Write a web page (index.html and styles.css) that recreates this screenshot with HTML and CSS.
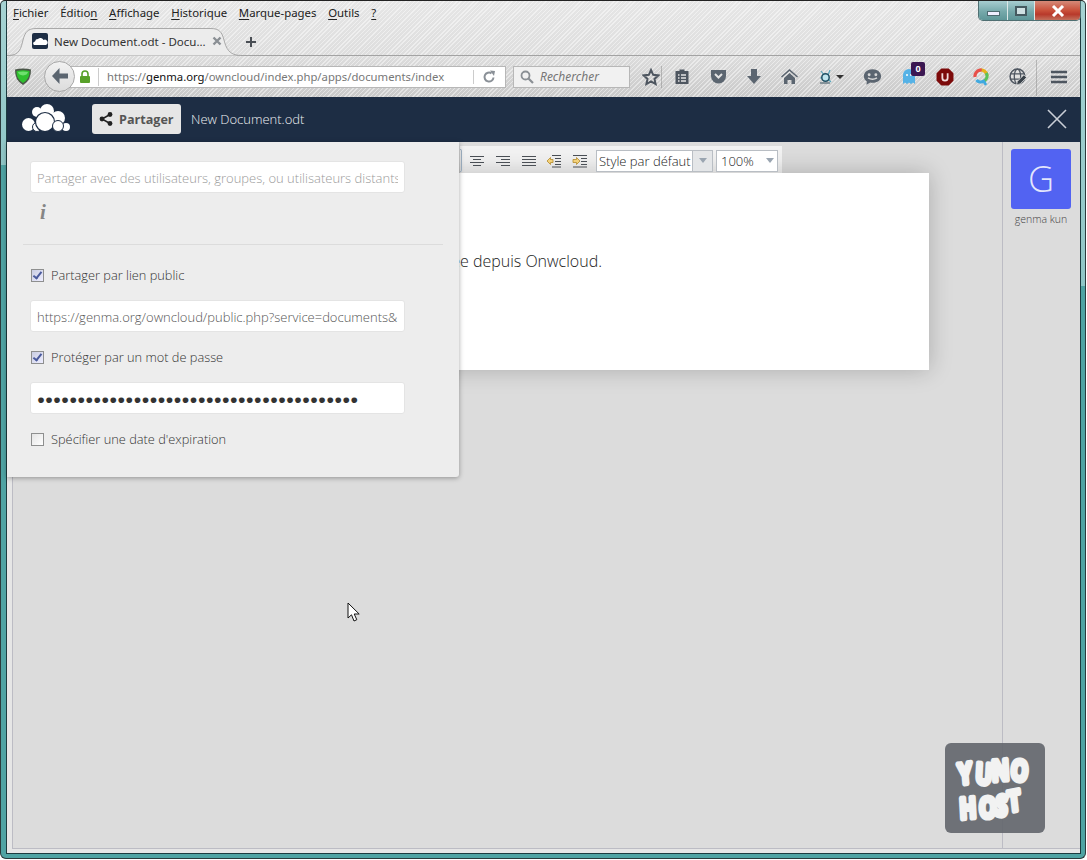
FILE: index.html
```html
<!DOCTYPE html>
<html lang="fr">
<head>
<meta charset="utf-8">
<title>New Document.odt</title>
<link rel="stylesheet" href="styles.css">
</head>
<body>
<div class="window">
  <div class="frame">
    <div class="browser">
      <div class="titlebar">
        <nav class="menu">
          <span><u>F</u>ichier</span>
          <span>Éditio<u>n</u></span>
          <span><u>A</u>ffichage</span>
          <span><u>H</u>istorique</span>
          <span><u>M</u>arque-pages</span>
          <span><u>O</u>utils</span>
          <span><u>?</u></span>
        </nav>
        <div class="winbtns">
          <div class="winbtn min"><i></i></div>
          <div class="winbtn max"><i></i></div>
          <div class="winbtn close">
            <svg width="16" height="12" viewBox="0 0 16 12"><path d="M3 1l10 10M13 1L3 11" stroke="#fff" stroke-width="3"/></svg>
          </div>
        </div>
      </div>

      <div class="tabstrip">
        <div class="tab">
          <svg class="tab-shape" width="233" height="28" viewBox="0 0 233 28"><path d="M0 27.500C12 27.500 13 20 15 12 17 4 20 .5 28 .5H203C211 .5 214 4 216 12 218 20 221 27.500 233 27.500" fill="#ececec" stroke="#a9a9a9"/></svg>
          <svg class="favicon" width="16" height="16" viewBox="0 0 16 16"><rect width="16" height="16" rx="2" fill="#1d2d44"/><path d="M2 12a2 2 0 0 1 1-3.600 3 3 0 0 1 3-2.400 3.400 3.400 0 0 1 5.500 1 2.600 2.600 0 0 1 2.500 5z" fill="#fff"/></svg>
          <span class="tab-title">New Document.odt - Docu...</span>
          <svg class="tab-x" width="10" height="10" viewBox="0 0 10 10"><path d="M1.500 1.500l7 7M8.500 1.500l-7 7" stroke="#8a8f94" stroke-width="2.400"/></svg>
        </div>
        <svg class="newtab" width="12" height="12" viewBox="0 0 12 12"><path d="M6 1v10M1 6h10" stroke="#4a4f55" stroke-width="2"/></svg>
      </div>

      <div class="navbar">
        <svg class="shield" width="18" height="19" viewBox="0 0 18 19"><path d="M1 2.500Q9 .5 17 2.500 17.500 13 9 18 .5 13 1 2.500z" fill="#4a5648"/><path d="M2.500 4Q9 2.500 15.500 4 15.800 12 9 16 2.200 12 2.500 4z" fill="#2fc02f"/><path d="M4 5Q9 4 14 5 13.500 8 9 8.500 4.500 8 4 5z" fill="#6fe06f"/></svg>
        <div class="urlgroup">
          <div class="backbtn">
            <svg width="20" height="18" viewBox="0 0 20 18"><path d="M9.500 1L2 9l7.500 8V11.500H18v-5H9.500z" fill="#5b6570"/></svg>
          </div>
          <div class="urlbar">
            <svg class="lock" width="12" height="13" viewBox="0 0 12 13"><path d="M3 6V4a3 3 0 0 1 6 0v2" fill="none" stroke="#58a12a" stroke-width="1.600"/><rect x="1" y="6" width="10" height="7" rx="1" fill="#58a12a"/></svg>
            <span class="url"><span class="dim">https://</span>genma.org<span class="dim">/owncloud/index.php/apps/documents/index</span></span>
            <svg class="reload" width="14" height="14" viewBox="0 0 14 14"><path d="M11.500 7.500A4.500 4.500 0 1 1 9.500 3.300" fill="none" stroke="#8a9097" stroke-width="2"/><path d="M8 .5l5 .5-1 5z" fill="#8a9097"/></svg>
          </div>
        </div>
        <div class="searchbar">
          <svg width="14" height="14" viewBox="0 0 14 14"><circle cx="5.500" cy="5.500" r="4" fill="none" stroke="#8a8f94" stroke-width="1.800"/><path d="M8.500 8.500l4.500 4.500" stroke="#8a8f94" stroke-width="2.200"/></svg>
          <span>Rechercher</span>
        </div>
        <div class="tools">
          <svg class="t-star" width="18" height="18" viewBox="0 0 18 18"><path d="M9 2l2.200 4.800 5.200.6-3.900 3.500 1.100 5.100L9 13.400 4.400 16l1.100-5.100L1.600 7.400l5.200-.6z" fill="none" stroke="#4e5660" stroke-width="2"/></svg>
          <span class="t-sep sep-a"></span>
          <svg class="t-clip" width="16" height="17" viewBox="0 0 16 17"><path d="M1.500 3h4V1.500h5V3h4v13h-13z" fill="#4e5660"/><path d="M4 7h1.500M7 7h5M4 10h1.500M7 10h5M4 13h1.500M7 13h5" stroke="#e4e4e4" stroke-width="1.400"/></svg>
          <svg class="t-pocket" width="17" height="15" viewBox="0 0 17 15"><path d="M1 1h15v6a7.500 7.500 0 0 1-15 0z" fill="#5b6570"/><path d="M5 5l3.500 3.500L12 5" fill="none" stroke="#e4e4e4" stroke-width="2"/></svg>
          <svg class="t-down" width="16" height="15" viewBox="0 0 16 15"><path d="M5 0h6v7h4l-7 8-7-8h4z" fill="#5b6570"/></svg>
          <svg class="t-home" width="17" height="15" viewBox="0 0 17 15"><path d="M8.500 0L0 7.500l1 1L8.500 2l7.500 6.500 1-1z" fill="#5b6570"/><path d="M3 9l5.500-5L14 9v6h-3.500v-4h-4v4H3z" fill="#5b6570"/></svg>
          <div class="t-net">
            <svg width="16" height="16" viewBox="0 0 16 16"><path d="M4 2l3 4M13 1l-2 5M3 9l2 0M11 10l3 3" stroke="#5aa7bd" stroke-width="1.200"/><circle cx="8.500" cy="8.500" r="3.700" fill="#bfe6ef" stroke="#1f4f63" stroke-width="1.500"/><path d="M3 14h10" stroke="#6b7c86" stroke-width="1.500"/></svg>
            <i></i>
          </div>
          <svg class="t-chat" width="19" height="18" viewBox="0 0 17 16"><path d="M8.500 1C4 1 .8 3.700.8 7.300c0 2 1 3.700 2.700 4.800L3 15l3.500-2c.6.100 1.300.2 2 .2 4.500 0 7.700-2.500 7.700-5.900S13 1 8.500 1z" fill="#5b6570"/><circle cx="5.500" cy="6" r="1.300" fill="#d8d8d8"/><circle cx="11.500" cy="6" r="1.300" fill="#d8d8d8"/><path d="M4.500 8.800q4 2.400 8 0" fill="none" stroke="#d8d8d8" stroke-width="1.400"/></svg>
          <div class="t-ghost">
            <svg width="15" height="17" viewBox="0 0 15 17"><path d="M1 7a6 6 0 0 1 12 0v9l-2-1.500L9 16l-2-1.500L5 16l-2-1.500L1 16z" fill="#55b2e6"/><circle cx="5" cy="7" r="1" fill="#fff"/><circle cx="9" cy="7" r="1" fill="#fff"/></svg>
            <b class="badge">0</b>
          </div>
          <svg class="t-ublock" width="18" height="18" viewBox="0 0 17 17"><path d="M5 .5h7L16.500 5v7L12 16.500H5L.5 12V5z" fill="#7c0a0a"/><path d="M6 5v4.500a2.500 2.500 0 0 0 5 0V5" fill="none" stroke="#f0dcdc" stroke-width="1.700"/></svg>
          <svg class="t-q" width="16" height="18" viewBox="0 0 16 18"><circle cx="8" cy="8" r="6" fill="none" stroke="#e7b21c" stroke-width="3.200" stroke-dasharray="10 30" transform="rotate(-100 8 8)"/><circle cx="8" cy="8" r="6" fill="none" stroke="#e8504a" stroke-width="3.200" stroke-dasharray="11 30" transform="rotate(170 8 8)"/><circle cx="8" cy="8" r="6" fill="none" stroke="#5bc25b" stroke-width="3.200" stroke-dasharray="9 30" transform="rotate(-30 8 8)"/><circle cx="8" cy="8" r="6" fill="none" stroke="#3fa9e0" stroke-width="3.200" stroke-dasharray="8 30" transform="rotate(60 8 8)"/><path d="M10 12l3 5" stroke="#3fa9e0" stroke-width="2.600"/></svg>
          <svg class="t-globe" width="18" height="18" viewBox="0 0 17 17"><circle cx="8" cy="8" r="7" fill="#e0e0e0" stroke="#4e5660" stroke-width="1.400"/><ellipse cx="8" cy="8" rx="3" ry="7" fill="none" stroke="#4e5660" stroke-width="1.200"/><path d="M1 5.500h14M1 10.500h14" stroke="#4e5660" stroke-width="1.200"/><path d="M7 16l1-3.500 6-6 2.500 2.500-6 6z" fill="#3a424a" stroke="#e0e0e0" stroke-width=".7"/></svg>
          <span class="t-sep sep-b"></span>
          <svg class="t-menu" width="16" height="14" viewBox="0 0 16 14"><path d="M0 2h16M0 7h16M0 12h16" stroke="#4e5660" stroke-width="2.600"/></svg>
        </div>
      </div>
    </div>

    <header class="docbar">
      <svg class="cloud" width="50" height="28" viewBox="0 0 50 28">
        <circle cx="7.500" cy="20.500" r="6.500" fill="#fff"/>
        <circle cx="16" cy="8" r="5" fill="#fff"/>
        <circle cx="26" cy="7" r="7" fill="#fff"/>
        <circle cx="37" cy="14" r="7" fill="#fff"/>
        <circle cx="45" cy="23" r="4" fill="#fff"/>
        <circle cx="16" cy="23" r="4.500" fill="#fff" stroke="#1d2d44"/>
        <circle cx="24" cy="18" r="9.500" fill="#fff" stroke="#1d2d44" stroke-width="1.200"/>
        <circle cx="37" cy="22" r="5.500" fill="#fff" stroke="#1d2d44"/>
      </svg>
      <button class="sharebtn" type="button">
        <svg width="14" height="14" viewBox="0 0 14 14"><path d="M11 2.500L3 7l8 4.500" fill="none" stroke="#222" stroke-width="1.500"/><circle cx="11" cy="2.500" r="2.400" fill="#222"/><circle cx="3" cy="7" r="2.400" fill="#222"/><circle cx="11" cy="11.500" r="2.400" fill="#222"/></svg>
        <span>Partager</span>
      </button>
      <span class="docname">New Document.odt</span>
      <svg class="docclose" width="20" height="20" viewBox="0 0 20 20"><path d="M1 1l18 18M19 1L1 19" stroke="#c9ced6" stroke-width="1.600"/></svg>
    </header>

    <main class="workspace">
      <div class="editor">
        <div class="toolbar">
          <span class="tb-edge"></span>
          <svg width="16" height="12" viewBox="0 0 16 12"><path d="M1 1.500h14M4 4.500h8M1 7.500h14M4 10.500h8" stroke="#4a4f55"/></svg>
          <svg width="16" height="12" viewBox="0 0 16 12"><path d="M1 1.500h14M6 4.500h9M1 7.500h14M6 10.500h9" stroke="#4a4f55"/></svg>
          <svg width="16" height="12" viewBox="0 0 16 12"><path d="M1 1.500h14M1 4.500h14M1 7.500h14M1 10.500h14" stroke="#4a4f55"/></svg>
          <svg width="16" height="14" viewBox="0 0 16 14"><path d="M6 1.500h9M9 4.500h6M9 7.500h6M9 10.500h6M6 13h9" stroke="#4a4f55"/><path d="M1 7l3.500-3.500V5.500H7v3H4.500v2z" fill="#f4d27a" stroke="#b48a2c" stroke-width=".8"/></svg>
          <svg width="16" height="14" viewBox="0 0 16 14"><path d="M1 1.500h14M9 4.500h6M9 7.500h6M9 10.500h6M1 13h14" stroke="#4a4f55"/><path d="M8 7L4.500 3.500V5.500H1v3h3.500v2z" fill="#f4d27a" stroke="#b48a2c" stroke-width=".8"/></svg>
          <div class="select style-select">
            <span>Style par défaut</span>
            <span class="select-arrow"><i></i></span>
          </div>
          <div class="select zoom-select">
            <span>100%</span>
            <i></i>
          </div>
        </div>
        <article class="paper">
          <p>Document créée depuis Onwcloud.</p>
        </article>
      </div>

      <aside class="people">
        <div class="avatar">G</div>
        <div class="person">genma kun</div>
      </aside>

      <section class="sharepanel">
        <div class="field placeholder"><span>Partager avec des utilisateurs, groupes, ou utilisateurs distants</span></div>
        <div class="info">i</div>
        <hr>
        <label class="check"><span class="box on"></span>Partager par lien public</label>
        <div class="field"><span>https://genma.org/owncloud/public.php?service=documents&amp;</span></div>
        <label class="check"><span class="box on"></span>Protéger par un mot de passe</label>
        <div class="field dots"><span>●●●●●●●●●●●●●●●●●●●●●●●●●●●●●●●●●●●●●●●●</span></div>
        <label class="check"><span class="box"></span>Spécifier une date d'expiration</label>
      </section>

      <div class="yunohost">
        <svg width="100" height="90" viewBox="0 0 100 90">
          <text class="logo-text" x="14 30 47 65" y="32 31 29.500 28" rotate="-6 4 -4 6">YUNO</text>
          <text class="logo-text" x="15 34 50 64" y="58.500 57.500 55.500 53" rotate="-4 0 4 -8">HOST</text>
        </svg>
      </div>

      <svg class="pointer" width="14" height="21" viewBox="0 0 14 21"><path d="M1 1v15l3.500-3.200L7 19l2.800-1.300-2.600-5.700h5z" fill="#fff" stroke="#111" stroke-width="1"/></svg>
    </main>
  </div>
</div>
</body>
</html>
```

FILE: styles.css
```css
html, body { margin: 0; padding: 0; background: #fff; }
body { width: 1087px; height: 860px; overflow: hidden; font-family: "Open Sans", "Noto Sans", sans-serif; }

u { text-underline-offset: 2px; }

/* window frame */
.window { width: 1086px; height: 859px; box-sizing: border-box; background: linear-gradient(#a6d3d3, #8fc6c6) left top / 6px 164px no-repeat, linear-gradient(#a6d3d3, #8fc6c6) right top / 6px 285px no-repeat, #4fa3a3; border: 1px solid #2c3a3c; border-top-color: #222; border-radius: 5px 5px 6px 6px; padding: 0 4px 5px 5px; }
.frame { height: 100%; display: flex; flex-direction: column; background: #e6e6e6; border-left: 1px solid #1d3b3f; border-right: 1px solid #1d3b3f; border-bottom: 1px solid #1d3b3f; }

/* browser chrome */
.browser { height: 96px; flex: none; display: flex; flex-direction: column; background: repeating-linear-gradient(135deg, rgba(255,255,255,.45) 0 1px, rgba(255,255,255,0) 1px 3px), linear-gradient(#e6e6e6, #dedede 55%, #c9c9c9); }
.titlebar { height: 26px; display: flex; justify-content: space-between; }
.menu { display: flex; gap: 11.700px; padding: 4px 0 0 6px; font-size: 11.400px; line-height: 16px; color: #222; font-family: "Noto Sans", sans-serif; }
.winbtns { display: flex; height: 19px; margin-right: -1px; border: 1px solid #4f6f72; border-top: 0; border-radius: 0 0 5px 5px; overflow: hidden; }
.winbtn { display: flex; align-items: center; justify-content: center; border-right: 1px solid #dce8e8; }
.winbtn.min { width: 28px; background: linear-gradient(#a7cdd0, #76a9ab 55%, #5e9698); }
.winbtn.min i { display: block; width: 11px; height: 3px; margin-top: 6px; background: #eef; border: 1px solid #4d6a70; }
.winbtn.max { width: 26px; background: linear-gradient(#a7cdd0, #76a9ab 55%, #5e9698); }
.winbtn.max i { display: block; width: 8px; height: 6px; border: 2px solid #455a60; background: #cfe0e2; }
.winbtn.close { width: 45px; border-right: 0; background: linear-gradient(#d58a78, #c9503a 50%, #b8392b 70%, #c2705c); }

.tabstrip { height: 29px; display: flex; align-items: flex-end; padding-left: 1px; border-bottom: 1px solid #a3a3a3; box-sizing: border-box; }
.tab { position: relative; width: 233px; height: 28px; box-sizing: border-box; margin-bottom: -1px; display: flex; align-items: center; padding: 0 19px 2px 24px; }
.tab-shape { position: absolute; left: 0; top: 0; }
.favicon { position: relative; flex: none; }
.tab-title { position: relative; margin-left: 6px; flex: 1; font-size: 11.500px; white-space: nowrap; color: #333; font-family: "Noto Sans", sans-serif; }
.tab-x { position: relative; flex: none; }
.newtab { margin: 0 0 7px 4px; }

.navbar { height: 41px; display: flex; align-items: center; padding-left: 7px; }
.shield { flex: none; }
.urlgroup { position: relative; margin-left: 12px; width: 462px; }
.backbtn { position: absolute; left: 0; top: -5px; width: 31px; height: 31px; box-sizing: border-box; border-radius: 50%; display: flex; align-items: center; justify-content: center; background: linear-gradient(#f2f2f2, #dcdcdc); border: 1px solid #a9a9a9; z-index: 1; }
.urlbar { height: 22px; margin-left: 14px; box-sizing: border-box; display: flex; align-items: center; background: #fff; border: 1px solid #b7b7b7; padding-left: 20px; }
.lock { flex: none; }
.url { width: 366px; margin-left: 7px; padding-left: 8px; border-left: 1px solid #ccc; white-space: nowrap; font-size: 11.300px; line-height: 18px; color: #111; font-family: "Noto Sans", sans-serif; }
.dim { color: #777; }
.reload { box-sizing: content-box; padding-left: 8px; border-left: 1px solid #ccc; }
.searchbar { margin-left: 7px; width: 117px; height: 22px; box-sizing: border-box; display: flex; align-items: center; gap: 6px; padding-left: 6px; background: #f1f1f1; border: 1px solid #b7b7b7; font-size: 12px; font-style: italic; color: #777; font-family: "Noto Sans", sans-serif; }
.tools { position: relative; margin-left: 12px; flex: 1; display: flex; align-items: center; }
.t-sep { position: absolute; top: -2px; height: 22px; width: 1px; background: rgba(120,120,120,.4); }
.sep-a { left: 19px; }
.sep-b { left: 394px; top: -8px; height: 36px; }
.t-clip { margin-left: 14px; }
.t-pocket { margin-left: 20px; }
.t-down { margin-left: 19px; }
.t-home { margin-left: 19px; }
.t-net { margin-left: 19px; display: flex; align-items: center; gap: 3px; }
.t-net i { width: 0; height: 0; border: 4px solid transparent; border-top-color: #333; border-bottom: 0; }
.t-chat { margin-left: 19px; }
.t-ghost { position: relative; margin-left: 20px; height: 17px; }
.t-ghost svg { display: block; }
.badge { position: absolute; left: 9px; top: -6px; width: 14px; height: 14px; border-radius: 2px; background: #3b1752; color: #fff; font-size: 9px; line-height: 14px; text-align: center; }
.t-ublock { margin-left: 19px; }
.t-q { margin-left: 19px; }
.t-globe { margin-left: 20px; }
.t-menu { margin-left: 24px; }

/* owncloud header */
.docbar { height: 45px; flex: none; box-sizing: border-box; display: flex; align-items: center; background: #1d2d44; padding: 0 13px 1px 14px; }
.cloud { margin-top: -3px; }
.sharebtn { margin: 0 0 0 21px; width: 89px; height: 30px; padding: 0 0 0 7px; display: flex; align-items: center; gap: 6px; border: 0; border-radius: 3px; background: #e6e6e6; color: #555; font: 700 12.600px "Open Sans", sans-serif; }
.docname { margin-left: 10px; flex: 1; color: #eef0f3; font-size: 13px; font-weight: 300; }
.docclose { flex: none; }

/* document area */
.workspace { position: relative; flex: 1; display: flex; min-height: 0; margin: 0 0 4px 5px; background: #dcdcdc; border-left: 1px solid #bcbcc4; border-bottom: 1px solid #bcbcc4; }
.editor { flex: 1; padding-top: 4px; min-width: 0; }
.toolbar { margin-left: 447px; width: 322px; height: 27px; box-sizing: border-box; display: flex; align-items: center; background: #f2f2f2; padding-top: 2px; }
.tb-edge { flex: none; width: 2px; height: 23px; margin-right: 7px; border: 1px solid #9fb2c4; border-left: 0; border-radius: 0 3px 3px 0; box-sizing: border-box; }
.toolbar svg { margin-right: 9.750px; flex: none; }
.toolbar svg:nth-of-type(5) { margin-right: 8px; }
.select { height: 22px; box-sizing: border-box; display: flex; align-items: center; background: #fff; border: 1px solid #b9bec4; font-size: 13px; font-weight: 300; color: #222; }
.style-select { width: 117px; padding-left: 2px; justify-content: space-between; white-space: nowrap; }
.select-arrow { width: 19px; height: 20px; display: flex; align-items: center; justify-content: center; background: #e4e6e8; border-left: 1px solid #b9bec4; }
.select i { width: 0; height: 0; border: 4px solid transparent; border-top: 5px solid #9aa5b1; border-bottom: 0; }
.zoom-select { width: 62px; margin-left: 3px; padding: 0 3px 0 4px; justify-content: space-between; }
.paper { margin-left: 72px; width: 844px; height: 197px; box-sizing: border-box; background: #fff; box-shadow: 0 0 22px rgba(0,0,0,.22); padding-top: 77px; font-size: 16px; font-weight: 300; line-height: 22px; color: #222; }
.paper p { margin: 0; width: 517px; text-align: right; white-space: nowrap; }

.people { width: 78px; flex: none; box-sizing: border-box; border-left: 1px solid #bcbcc4; padding: 7px 0 0 8px; }
.avatar { width: 60px; height: 60px; border-radius: 3px; background: #5263f2; color: rgba(255,255,255,.85); font-size: 36px; font-weight: 300; line-height: 60px; text-align: center; }
.person { width: 60px; margin-top: 3px; font-size: 10.500px; font-weight: 300; text-align: center; color: #444; }

/* share dropdown over the document */
.sharepanel { position: absolute; left: -6px; top: 0; width: 452px; height: 335px; box-sizing: border-box; background: #ededed; border-radius: 0 0 3px 0; box-shadow: 0 1px 5px rgba(0,0,0,.35); padding: 19px 54px 0 23px; font-size: 12.800px; font-weight: 300; color: #333; }
.field { width: 375px; height: 32px; box-sizing: border-box; background: #fff; border: 1px solid #e4e4e4; border-radius: 3px; padding: 1px 6px 0; line-height: 30px; font-size: 13px; font-weight: 300; color: #555; white-space: nowrap; }
.field span { display: block; overflow: hidden; }
.placeholder { color: #9a9a9a; }
.dots { font-size: 13.300px; letter-spacing: 0; color: #333; font-family: "DejaVu Sans", sans-serif; padding-top: 2px; }
.info { margin: 8px 0 0 10px; height: 22px; font: italic 700 21px/22px "Liberation Serif", serif; color: #858585; }
.sharepanel hr { margin: 21px 0 20px -7px; width: 420px; height: 1px; border: 0; background: #dcdcdc; }
.check { display: flex; align-items: center; height: 20px; margin: 0 0 15px 1px; line-height: 20px; }
.field + .check { margin-top: 15px; }
.box { flex: none; position: relative; width: 13px; height: 13px; margin-right: 7px; box-sizing: border-box; background: linear-gradient(135deg, #e4e4e4, #fff); border: 1px solid #8e8f8f; }
.box.on { background: linear-gradient(135deg, #c9cde2, #eef); }
.box.on::after { content: ""; position: absolute; left: 3px; top: 0; width: 3px; height: 7px; border: solid #4a5a9c; border-width: 0 2px 2px 0; transform: rotate(38deg); }

/* yunohost badge and mouse pointer */
.yunohost { position: absolute; left: 932px; top: 601px; width: 100px; height: 90px; border-radius: 6px; background: rgba(100,103,110,.92); }
.yunohost svg { display: block; }
.logo-text { font-family: "Open Sans", sans-serif; font-size: 22px; font-weight: 700; fill: #f2f2f2; stroke: #f2f2f2; stroke-width: 4px; stroke-linejoin: round; stroke-linecap: round; transform: scaleY(1.3); }
.pointer { position: absolute; left: 334px; top: 460px; }
```
